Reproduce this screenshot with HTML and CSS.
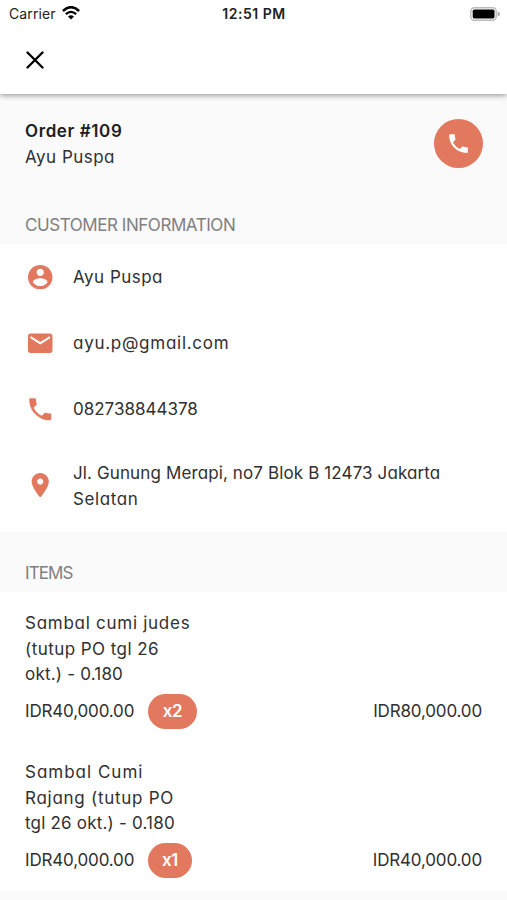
FILE: index.html
```
<!DOCTYPE html>
<html lang="id">
<head>
<meta charset="utf-8">
<title>Order #109</title>
<link rel="stylesheet" href="styles.css">
</head>
<body>
<header class="topbar">
  <div class="status">
    <div class="status-left"><span class="carrier">Carrier</span>
      <svg class="wifi" viewBox="0 0 18 14"><path d="M.9 5Q9-2.6 17.1 5" fill="none" stroke="#000" stroke-width="2.5"/><path d="M3.8 8.2Q9 3.5 14.2 8.2" fill="none" stroke="#000" stroke-width="2.3"/><path d="M6 10.4Q9 7.9 12 10.4L9 13.5Z"/></svg>
    </div>
    <span class="clock">12:51 PM</span>
    <svg class="battery" viewBox="0 0 31 14"><rect x=".8" y=".8" width="25.4" height="12.4" rx="3.6" fill="#fff" stroke="#bbb" stroke-width="1.4"/><rect x="2.7" y="2.6" width="21.8" height="8.8" rx="1.6"/><path d="M27.6 4.5Q30 5.3 30 7T27.6 9.5Z" fill="#aaa"/></svg>
  </div>
  <svg class="close" viewBox="0 0 18 18"><path d="M1.5 1.5L16.5 16.5M16.5 1.5L1.5 16.5" stroke="#000" stroke-width="2.3" stroke-linecap="round"/></svg>
</header>
<main>
  <section class="order">
    <div><h1>Order #109</h1><p class="name">Ayu Puspa</p></div>
    <div class="call"><svg viewBox="0 0 24 24"><path d="M6.62 10.79c1.44 2.83 3.76 5.14 6.59 6.59l2.2-2.2c.27-.27.67-.36 1.02-.24 1.12.37 2.33.57 3.57.57.55 0 1 .45 1 1V20c0 .55-.45 1-1 1-9.39 0-17-7.61-17-17 0-.55.45-1 1-1h3.5c.55 0 1 .45 1 1 0 1.25.2 2.45.57 3.57.11.35.03.74-.25 1.02l-2.2 2.2z"/></svg></div>
  </section>
  <h2 class="heading-customer">CUSTOMER INFORMATION</h2>
  <section class="info">
    <div class="row"><svg class="icon" viewBox="0 0 24 24"><path d="M12 0C5.37 0 0 5.37 0 12s5.37 12 12 12 12-5.37 12-12S18.63 0 12 0zm0 3.6c1.99 0 3.6 1.61 3.6 3.6s-1.61 3.6-3.6 3.6-3.6-1.61-3.6-3.6 1.61-3.6 3.6-3.6zm0 17.04c-3 0-5.65-1.54-7.2-3.86.04-2.39 4.8-3.7 7.2-3.7s7.16 1.31 7.2 3.7c-1.55 2.32-4.2 3.86-7.2 3.86z"/></svg><p class="name">Ayu Puspa</p></div>
    <div class="row"><svg class="icon" viewBox="2 2 20 20"><path d="M20 4H4c-1.1 0-1.99.9-1.99 2L2 18c0 1.1.9 2 2 2h16c1.1 0 2-.9 2-2V6c0-1.1-.9-2-2-2zm0 4l-8 5-8-5V6l8 5 8-5v2z"/></svg><p class="email">ayu.p@gmail.com</p></div>
    <div class="row"><svg class="icon" viewBox="2 2 20 20"><path d="M6.62 10.79c1.44 2.83 3.76 5.14 6.59 6.59l2.2-2.2c.27-.27.67-.36 1.02-.24 1.12.37 2.33.57 3.57.57.55 0 1 .45 1 1V20c0 .55-.45 1-1 1-9.39 0-17-7.61-17-17 0-.55.45-1 1-1h3.5c.55 0 1 .45 1 1 0 1.25.2 2.45.57 3.57.11.35.03.74-.25 1.02l-2.2 2.2z"/></svg><p>082738844378</p></div>
    <div class="row address"><svg class="icon" viewBox="2 2 20 20"><path d="M12 2C8.13 2 5 5.13 5 9c0 5.25 7 13 7 13s7-7.75 7-13c0-3.87-3.13-7-7-7zm0 9.5c-1.38 0-2.5-1.12-2.5-2.5s1.12-2.5 2.5-2.5 2.5 1.12 2.5 2.5-1.12 2.5-2.5 2.5z"/></svg><p><span class="street">Jl. Gunung Merapi, no7 Blok B 12473 Jakarta</span><br><span class="city">Selatan</span></p></div>
  </section>
  <h2 class="heading-items">ITEMS</h2>
  <section class="items">
    <article><p><span class="wide">Sambal cumi judes</span><br><span class="medium">(tutup PO tgl 26</span><br><span class="snug">okt.) - 0.180</span></p>
      <div class="line"><span class="price">IDR40,000.00</span><b class="qty">x2</b><span class="price total">IDR80,000.00</span></div></article>
    <article><p><span class="widest">Sambal Cumi</span><br><span class="wide">Rajang (tutup PO</span><br><span class="snug">tgl 26 okt.) - 0.180</span></p>
      <div class="line"><span class="price">IDR40,000.00</span><b class="qty single">x1</b><span class="price total">IDR40,000.00</span></div></article>
  </section>
</main>
</body>
</html>
```
FILE: styles.css
```
* { box-sizing: border-box; }
body { margin: 0; width: 507px; height: 900px; overflow: hidden; background: #fafafa; color: #303030; font: 400 17px/25.7px Inter, "Liberation Sans", sans-serif; font-feature-settings: "cv11"; }
h1, h2, p { margin: 0; font-size: inherit; line-height: inherit; }
h1 { font-weight: 600; color: #202020; letter-spacing: .6px; }
h2 { font-weight: 400; color: #808080; padding-left: 25px; }
svg { display: block; }
.name { letter-spacing: .48px; }
.email { letter-spacing: .73px; }
.street { letter-spacing: .12px; }
.city { letter-spacing: .6px; }
.widest { letter-spacing: 1px; }
.wide { letter-spacing: .73px; }
.medium { letter-spacing: .45px; }
.snug { letter-spacing: .2px; }
.price { letter-spacing: -.16px; }
.topbar { position: relative; height: 94px; background: #fff; box-shadow: 0 1px 6px rgba(0,0,0,.45); }
.status { display: grid; grid-template-columns: 1fr auto 1fr; align-items: center; height: 27px; padding: 0 6px 0 9px; font-size: 14px; color: #222; font-feature-settings: normal; }
.status-left { display: flex; align-items: center; gap: 6px; }
.carrier { letter-spacing: .1px; }
.wifi { width: 18px; height: 14px; }
.clock { font-weight: 600; letter-spacing: .5px; margin-right: 2px; }
.battery { width: 31px; height: 14px; justify-self: end; }
.close { width: 18px; height: 18px; margin: 24px 0 0 26px; }
.order { display: flex; justify-content: space-between; height: 107px; padding: 25px 24.5px 0 25px; }
.call { width: 49px; height: 49px; margin-top: .4px; border-radius: 50%; background: #e2785d; display: grid; place-items: center; }
.call svg { width: 25px; fill: #fff; }
.heading-customer { height: 43px; padding-top: 12px; letter-spacing: -.44px; }
.info { height: 288px; background: #fff; }
.row { display: flex; align-items: center; gap: 20.5px; height: 66px; padding-left: 28px; }
.row p { padding-top: 2px; }
.address { height: 86px; }
.address p { padding-top: 3px; }
.icon { width: 24.5px; height: 24.5px; fill: #e2785d; }
.heading-items { height: 60px; padding-top: 29px; letter-spacing: -.9px; }
.items { height: 299px; padding: 19px 25px 0; background: #fff; }
article { height: 149px; }
.line { display: flex; align-items: center; height: 36px; margin-top: 6px; }
.qty { width: 49px; height: 35px; margin: 0 0 1px 13.6px; border-radius: 18px; background: #e2785d; color: #fff; font-weight: 600; line-height: 35px; text-align: center; letter-spacing: -.5px; }
.single { width: 44px; }
.total { margin-left: auto; }
```
